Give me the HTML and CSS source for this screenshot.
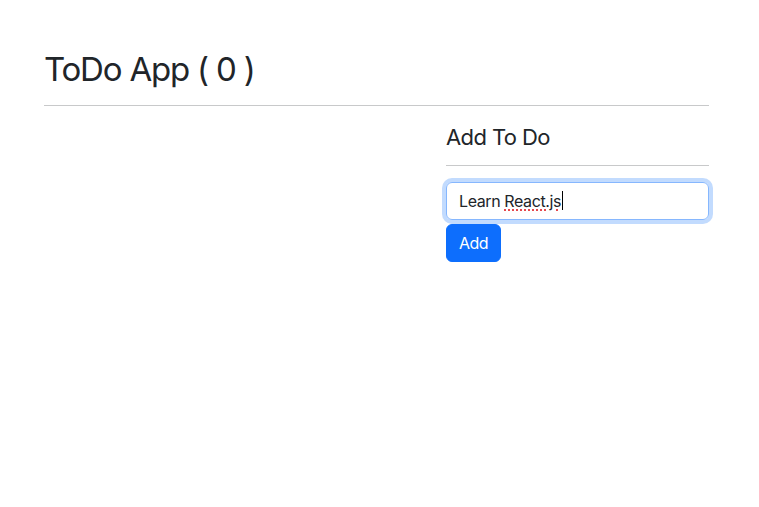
FILE: index.html
```html
<!DOCTYPE html>
<html>
<head>
<meta charset="utf-8">
<link rel="stylesheet" href="styles.css">
</head>
<body>
<div class="container">
  <h1 class="title">ToDo App ( 0 )</h1>
  <hr class="rule">
  <div class="row">
    <div class="col-left"></div>
    <div class="col-right">
      <h3 class="subtitle">Add To Do</h3>
      <hr class="rule">
      <form class="form">
        <div class="input">Learn <span class="misspelled">React.js</span><span class="caret"></span></div>
        <button type="button" class="btn">Add</button>
      </form>
    </div>
  </div>
</div>
</body>
</html>
```
FILE: styles.css
```css
* { box-sizing: border-box; }
html, body { margin: 0; background: #fff; }
body {
  font-family: "Inter", "Liberation Sans", sans-serif;
  color: #212529;
  font-size: 16px;
  line-height: 1.5;
}
.container {
  width: 665px;
  margin-left: 44px;
  padding-top: 50px;
}
.title {
  font-size: 33px;
  font-weight: 400;
  line-height: 1.2;
  margin: 0 0 15px 0;
  letter-spacing: -1.2px;
}
.rule {
  border: 0;
  border-top: 1px solid #c8c9ca;
  margin: 0;
}
.row {
  display: flex;
  gap: 24px;
}
.col-left { width: 378px; }
.col-right { width: 263px; padding-top: 18px; }
.subtitle {
  font-size: 22px;
  font-weight: 400;
  line-height: 1.2;
  margin: 0 0 15px 0;
  letter-spacing: -0.6px;
}
.form {
  display: flex;
  flex-direction: column;
  align-items: flex-start;
  gap: 4px;
  margin-top: 16px;
}
.input {
  width: 263px;
  height: 38px;
  border: 1px solid #86b7fe;
  border-radius: 6px;
  box-shadow: 0 0 0 4px rgba(13,110,253,.25);
  padding: 6px 12px;
  font-size: 16px;
  line-height: 24px;
  display: flex;
  align-items: center;
  white-space: pre;
  letter-spacing: -0.4px;
}
.misspelled {
  text-decoration: underline dotted #e5484d;
  text-decoration-thickness: 2px;
  text-underline-offset: 3px;
}
.caret {
  display: inline-block;
  width: 1px;
  height: 19px;
  background: #000;
  margin-left: 1px;
}
.btn {
  background: #0d6efd;
  color: #fff;
  border: 1px solid #0d6efd;
  border-radius: 6px;
  font-family: inherit;
  font-size: 16px;
  line-height: 24px;
  padding: 6px 12px;
  height: 38px;
  letter-spacing: -0.6px;
}
```
